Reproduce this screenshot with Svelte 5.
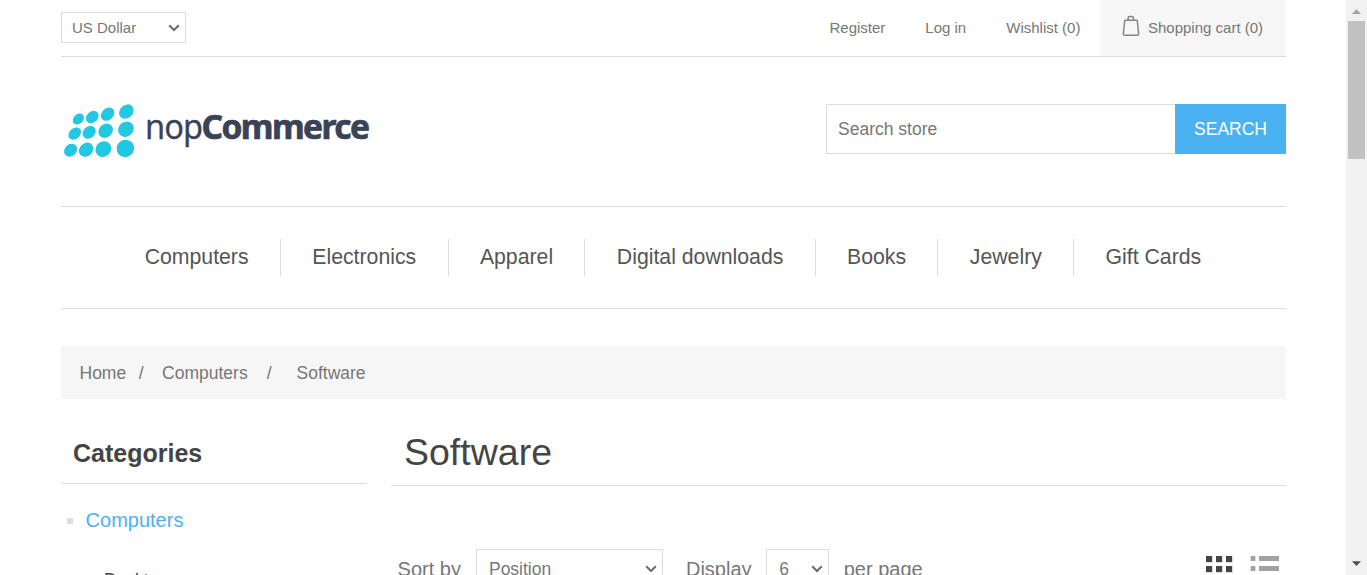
<script>
  const links = ['Register', 'Log in', 'Wishlist (0)'];
  const menu = ['Computers', 'Electronics', 'Apparel', 'Digital downloads', 'Books', 'Jewelry', 'Gift Cards'];
  // cx, cy, rx, ry
  const dots = [
    [17.4, 19, 6.2, 4.8], [31.3, 17, 7, 5.6], [46.6, 14.2, 7.5, 5.8], [65.4, 11.6, 8, 6.5],
    [13.7, 33.6, 7, 5.4], [28.2, 32.3, 7.2, 5.8], [44.7, 30.7, 7.8, 6.6], [64.9, 29.2, 8.3, 7.3],
    [9.6, 50.2, 7.1, 5.9], [25.1, 49.7, 7.8, 6.5], [42.4, 49.1, 8.3, 7.5], [64.4, 48.4, 8.9, 8.6]
  ];
</script>

{#snippet chevron()}
  <svg class="chevron" width="12" height="8" viewBox="0 0 12 8"><path d="M1.2 1.2 6 6 10.8 1.2" fill="none" stroke="#6c6c6c" stroke-width="2" /></svg>
{/snippet}

<div class="page">
  <div class="content">
    <header class="upper">
      <div class="select currency"><span>US Dollar</span>{@render chevron()}</div>
      <nav class="links">
        {#each links as link}<a href="#top">{link}</a>{/each}
        <a href="#top" class="cart">
          <svg width="18" height="22" viewBox="0 0 18 22" fill="none" stroke="#858585" stroke-width="1.5">
            <path d="M3.4 5.2H14.6Q15.2 5.2 15.3 6L16.6 18.4Q16.8 20.3 15.2 20.3H2.8Q1.2 20.3 1.4 18.4L2.7 6Q2.8 5.2 3.4 5.2Z" />
            <path d="M6.2 5V2.8Q6.2 1.4 7.6 1.4H10Q11.4 1.4 11.4 2.8V5" />
          </svg>
          <span>Shopping cart (0)</span>
        </a>
      </nav>
    </header>

    <div class="lower">
      <svg class="logo" width="312" height="62" viewBox="0 0 312 62">
        {#each dots as [cx, cy, rx, ry]}
          <ellipse {cx} {cy} {rx} {ry} transform="rotate(-43 {cx} {cy})" fill="#22c8e2" />
        {/each}
        <text x="84" y="39.4" class="nop" textLength="57" lengthAdjust="spacingAndGlyphs">nop</text>
        <text x="140.5" y="39.4" class="commerce" textLength="167" lengthAdjust="spacingAndGlyphs">Commerce</text>
      </svg>
      <div class="search">
        <div class="field">Search store</div>
        <button>SEARCH</button>
      </div>
    </div>

    <nav class="menu">
      {#each menu as item}<a href="#top">{item}</a>{/each}
    </nav>

    <div class="breadcrumb">
      <span class="home">Home</span><span class="sep1">/</span><span class="mid">Computers</span><span class="sep2">/</span><span>Software</span>
    </div>

    <div class="columns">
      <aside>
        <h2>Categories</h2>
        <div class="category"><i></i><span>Computers</span></div>
        <div class="sub">Desktops</div>
      </aside>
      <main>
        <h1>Software</h1>
        <div class="selectors">
          <span class="label">Sort by</span>
          <div class="select sort"><span>Position</span>{@render chevron()}</div>
          <span class="label display">Display</span>
          <div class="select size"><span>6</span>{@render chevron()}</div>
          <span class="label per">per page</span>
          <svg class="modes" width="74" height="26" viewBox="0 0 74 26" shape-rendering="crispEdges">
            {#each [0, 10, 20] as y}
              {#each [0, 10, 20] as x}
                <rect {x} {y} width="7" height="7" fill="#dcdcdc" />
                <rect {x} {y} width="6" height="6" fill="#444" />
              {/each}
              <rect x="44" {y} width="6" height="5" fill="#dcdcdc" />
              <rect x="45" {y} width="4" height="5" fill="#a2a2a2" />
              <rect x="53" {y} width="20" height="5" fill="#a2a2a2" />
            {/each}
          </svg>
        </div>
      </main>
    </div>
  </div>

  <div class="scrollbar">
    <svg width="21" height="21" viewBox="0 0 21 21"><path d="M6 14 10.5 9.3 15 14Z" fill="#a3a3a3" /></svg>
    <div class="thumb"></div>
    <svg width="21" height="21" viewBox="0 0 21 21"><path d="M6 7.2H15L10.5 12Z" fill="#505050" /></svg>
  </div>
</div>

<style>
  :global(body) { overflow: hidden; }
  .page {
    display: flex;
    justify-content: space-between;
    height: 575px;
    overflow: hidden;
    background: #fff;
    color: #777;
    font-family: "Liberation Sans", Arial, sans-serif;
    font-size: 15px;
  }
  .page, .page * { box-sizing: border-box; }
  a { color: inherit; text-decoration: none; }
  h1, h2 { margin: 0; color: #444; }
  .content { width: 1225px; margin-left: 61px; }
  .upper {
    display: flex;
    justify-content: space-between;
    height: 57px;
    border-bottom: 1px solid #ddd;
  }
  .select {
    display: flex;
    align-items: center;
    justify-content: space-between;
    border: 1px solid #ddd;
  }
  .currency { width: 125px; height: 31px; margin-top: 12px; padding: 0 5px 0 10px; }
  .links { display: flex; line-height: 56px; white-space: nowrap; }
  .links a { margin-right: 40px; }
  .links a.cart {
    display: flex;
    gap: 8px;
    width: 186px;
    margin: 0 0 0 -20.4px;
    padding-left: 22px;
    background: #f6f6f6;
  }
  .cart svg { margin-top: 15px; }
  .lower {
    display: flex;
    justify-content: space-between;
    height: 150px;
    padding-top: 47px;
    border-bottom: 1px solid #ddd;
  }
  .logo { margin-top: -4px; overflow: visible; }
  .nop { font: 400 34px "Noto Sans", sans-serif; letter-spacing: -1px; fill: #3a4256; stroke: #3a4256; stroke-width: 0.3px; }
  .commerce {
    font: 700 34px "Noto Sans", sans-serif;
    letter-spacing: -1.6px;
    fill: #3a4256;
    stroke: #3a4256;
    stroke-width: 0.7px;
  }
  .search { display: flex; width: 460px; height: 50px; font-size: 17.5px; }
  .field {
    flex: 1;
    padding-left: 11px;
    border: 1px solid #ddd;
    border-right: 0;
    line-height: 48px;
  }
  button {
    width: 111px;
    padding: 0;
    border: 0;
    background: #4ab2f1;
    color: #fff;
    font: 17.5px "Liberation Sans", Arial, sans-serif;
  }
  .menu {
    display: flex;
    justify-content: center;
    height: 102px;
    padding: 32px 1.2px 0 0;
    border-bottom: 1px solid #ddd;
    color: #555;
    font-size: 21.25px;
    white-space: nowrap;
  }
  .menu a { height: 37px; padding: 0 31.35px; border-left: 1px solid #ddd; line-height: 36px; }
  .menu a:first-child { border-left: 0; }
  .breadcrumb {
    display: flex;
    height: 53px;
    margin-top: 37px;
    padding-left: 18.5px;
    background: #f6f6f6;
    font-size: 17.5px;
    line-height: 55px;
  }
  .sep1 { margin: 0 18.5px 0 12.5px; }
  .sep2 { margin: 0 25px 0 19px; }
  .columns { display: flex; gap: 24px; }
  aside { width: 306px; }
  h2 {
    height: 85px;
    padding: 40px 0 0 12px;
    border-bottom: 1px solid #ddd;
    font-size: 25px;
    line-height: 28px;
  }
  .category {
    display: flex;
    align-items: center;
    height: 23px;
    margin-top: 25px;
    padding-left: 6px;
    color: #4ab2f1;
    font-size: 20px;
  }
  .category i { width: 6px; height: 6px; margin: 0 12.6px 0 0; background: #ddd; }
  .sub { margin: 38px 0 0 43px; color: #444; font-size: 17.5px; line-height: 20px; }
  main { width: 895px; }
  h1 {
    height: 87px;
    padding: 32px 0 0 13px;
    border-bottom: 1px solid #ddd;
    font-size: 37.5px;
    font-weight: 400;
    line-height: 43px;
  }
  .selectors { display: flex; height: 40px; margin-top: 63px; padding: 0 6px 0 6.6px; line-height: 40px; }
  .label { font-size: 20px; white-space: nowrap; }
  .sort, .size { height: 40px; padding: 0 5px 0 12px; font-size: 17.5px; }
  .sort { width: 187px; margin-left: 15px; }
  .size { width: 63px; margin-left: 14.6px; }
  .display { margin-left: 23px; }
  .per { margin-left: 14.6px; }
  .modes { margin: 7px 0 0 auto; }
  .scrollbar {
    display: flex;
    flex-direction: column;
    width: 21px;
    background: #f1f1f1;
  }
  .thumb { width: 17px; height: 138px; margin: 0 2px auto; background: #c1c1c1; }
</style>
